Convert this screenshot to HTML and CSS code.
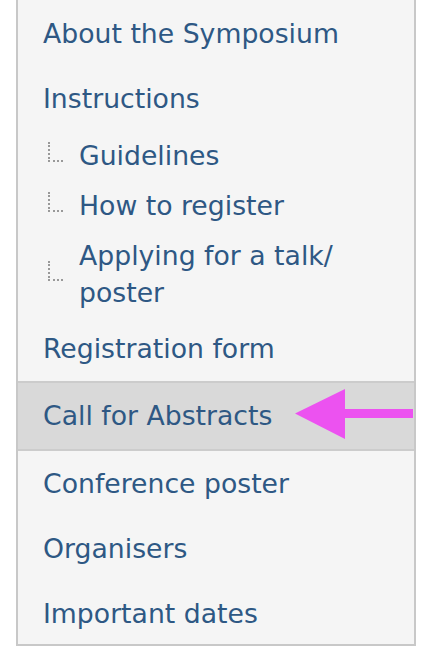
FILE: index.html
```html
<!DOCTYPE html>
<html lang="en">
<head>
<meta charset="utf-8">
<title>Symposium menu</title>
<link rel="stylesheet" href="styles.css">
</head>
<body>
<nav class="panel">
  <ul class="menu">
    <li class="item"><a class="link" href="#">About the Symposium</a></li>
    <li class="item">
      <a class="link" href="#">Instructions</a>
      <ul class="submenu">
        <li class="subitem"><span class="branch"></span><a class="sublink" href="#">Guidelines</a></li>
        <li class="subitem"><span class="branch"></span><a class="sublink" href="#">How to register</a></li>
        <li class="subitem"><span class="branch"></span><a class="sublink" href="#">Applying for a talk/<wbr>poster</a></li>
      </ul>
    </li>
    <li class="item"><a class="link" href="#">Registration form</a></li>
    <li class="item active">
      <a class="link" href="#">Call for Abstracts</a>
      <svg class="arrow" width="118" height="50" viewBox="0 0 118 50" aria-hidden="true">
        <polygon points="0,24.5 50,0 50,20 118,20 118,29 50,29 50,50" fill="#ec52f0"/>
      </svg>
    </li>
    <li class="item"><a class="link" href="#">Conference poster</a></li>
    <li class="item"><a class="link" href="#">Organisers</a></li>
    <li class="item last"><a class="link" href="#">Important dates</a></li>
  </ul>
</nav>
</body>
</html>
```

FILE: styles.css
```css
html, body {
  margin: 0;
  padding: 0;
  background: #ffffff;
}

body {
  font-family: "DejaVu Sans", Verdana, sans-serif;
  font-size: 26.7px;
  line-height: 37px;
}

.panel {
  margin-left: 16px;
  width: 396px;
  background: #f5f5f5;
  border: 2px solid #c8c8c8;
  border-top: none;
  padding-top: 1px;
}

.menu,
.submenu {
  list-style: none;
  margin: 0;
  padding: 0;
}

.link,
.sublink {
  color: #2e5884;
  text-decoration: none;
}

.item > .link {
  display: block;
  padding: 14px 0 14px 25px;
}

.item.last > .link {
  padding-bottom: 12px;
}

.item.active {
  position: relative;
  background: #d9d9d9;
  border-top: 2px solid #cccccc;
  border-bottom: 2px solid #cccccc;
}

.item.active > .link {
  padding-bottom: 15px;
}

.arrow {
  position: absolute;
  left: 277px;
  top: 6px;
}

.submenu {
  margin-bottom: -2px;
}

.subitem {
  display: flex;
  align-items: center;
  padding: 6px 0 7px 30px;
}

.branch {
  flex: none;
  width: 13px;
  height: 18px;
  margin-top: -7px;
  margin-right: 16px;
  border-left: 2px dotted #999999;
  border-bottom: 2px dotted #999999;
}

.sublink {
  flex: 1;
  padding-right: 20px;
}
```
